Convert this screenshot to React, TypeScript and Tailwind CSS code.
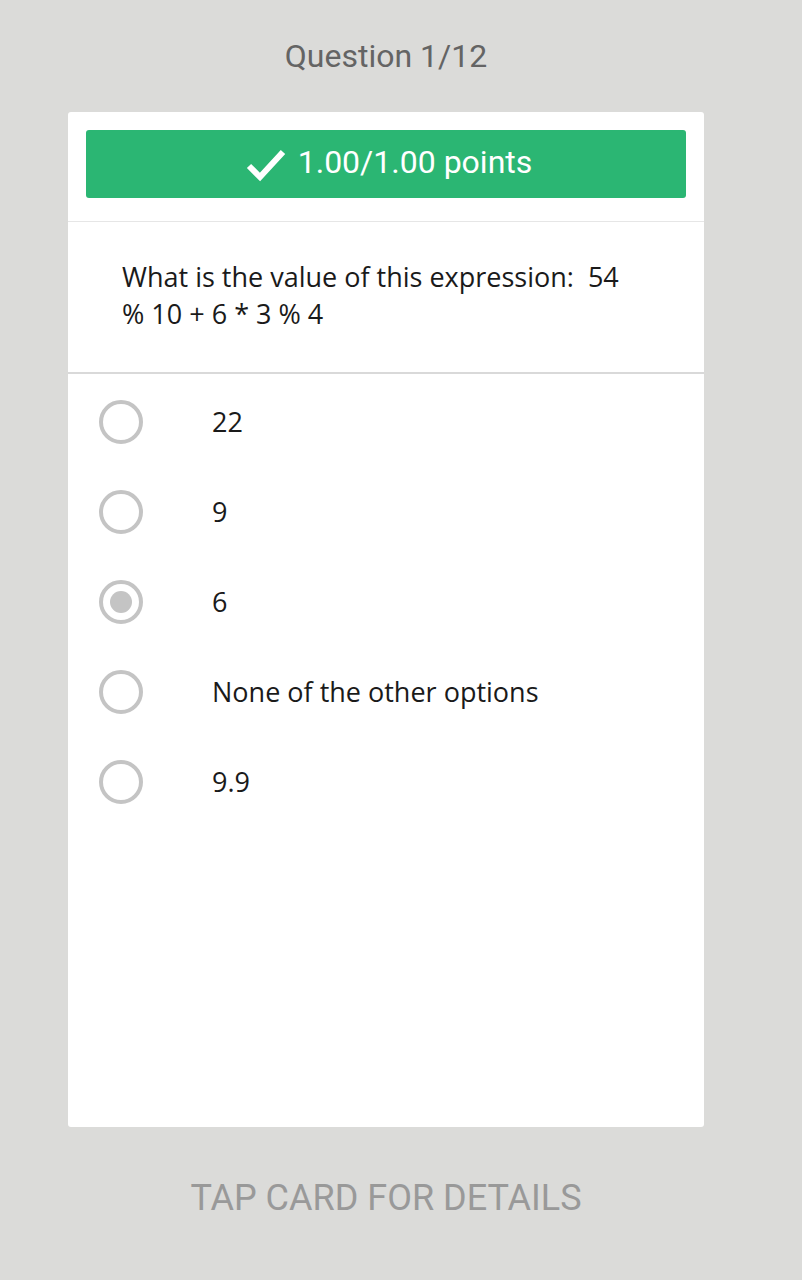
const options = ["22", "9", "6", "None of the other options", "9.9"]
const selected = 2

function Radio({ checked }: { checked: boolean }) {
  return (
    <div className="w-[44px] h-[44px] rounded-full border-[4px] border-[#c4c4c4] flex items-center justify-center">
      {checked && <div className="w-[22px] h-[22px] rounded-full bg-[#c4c4c4]" />}
    </div>
  )
}

export default function App() {
  return (
    <div className="w-[802px] h-[1280px] bg-[#dbdbd9] overflow-hidden">
      <div className="w-[772px] flex flex-col">
        <div
          className="h-[112px] pt-[36px] text-center text-[32px] leading-[40px] text-[#646464]"
          style={{ fontFamily: "Roboto, sans-serif" }}
        >
          Question 1/12
        </div>

        <div className="mx-[68px] h-[1015px] bg-white rounded-[3px] flex flex-col">
          <div className="px-[18px] pt-[18px] pb-[23px] border-b border-[#e6e6e6]">
            <div
              className="h-[68px] pl-[6px] bg-[#2bb673] rounded-[3px] flex items-center justify-center gap-[12px] text-white text-[32px]"
              style={{ fontFamily: "Roboto, sans-serif" }}
            >
              <svg width="40" height="34" viewBox="0 0 40 34" className="mt-[4px]">
                <path d="M3 17 L14 28 L37 3" fill="none" stroke="white" strokeWidth="6" />
              </svg>
              <span className="-mt-[4px]">1.00/1.00 points</span>
            </div>
          </div>

          <div
            className="pl-[54px] pr-[62px] pt-[36px] pb-[40px] border-b-2 border-[#d9d9d9] text-[27px] leading-[37px] text-[#1a1a1a]"
            style={{ fontFamily: "'Open Sans', sans-serif" }}
          >
            What is the value of this expression:&nbsp; 54 % 10 + 6 * 3 % 4
          </div>

          <div className="flex flex-col pt-[3px]" style={{ fontFamily: "'Open Sans', sans-serif" }}>
            {options.map((o, i) => (
              <div key={o} className="h-[90px] flex items-center pl-[31px]">
                <Radio checked={i === selected} />
                <span className="ml-[69px] text-[27px] text-[#1a1a1a]">{o}</span>
              </div>
            ))}
          </div>
        </div>

        <div
          className="pt-[44px] text-center text-[36px] text-[#999999]"
          style={{ fontFamily: "Roboto, sans-serif" }}
        >
          TAP CARD FOR DETAILS
        </div>
      </div>
    </div>
  )
}
